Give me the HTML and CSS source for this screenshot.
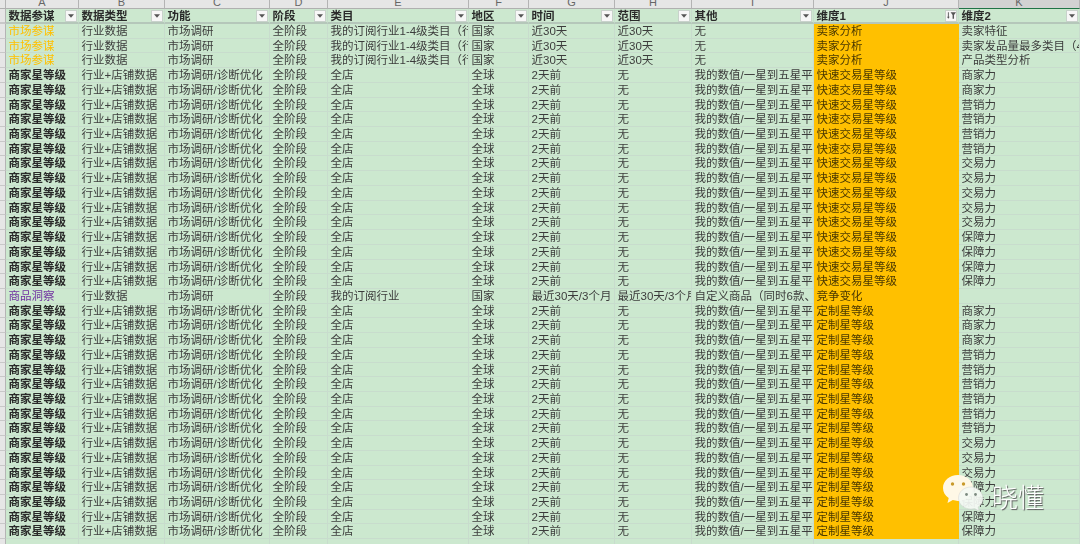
FILE: index.html
```html
<!DOCTYPE html>
<html lang="zh-CN">
<head>
<meta charset="utf-8">
<title>数据参谋</title>
<link rel="stylesheet" href="styles.css">
</head>
<body>
<div class="sheet">
<div class="row letters"><span></span><span>A</span><span>B</span><span>C</span><span>D</span><span>E</span><span>F</span><span>G</span><span>H</span><span>I</span><span>J</span><span class="sel">K</span></div>
<div class="row head"><span class="g"></span>
<span>数据参谋<i class="fb"><svg viewBox="0 0 7 4"><path d="M0 0h7L3.500 4z"/></svg></i></span>
<span>数据类型<i class="fb"><svg viewBox="0 0 7 4"><path d="M0 0h7L3.500 4z"/></svg></i></span>
<span>功能<i class="fb"><svg viewBox="0 0 7 4"><path d="M0 0h7L3.500 4z"/></svg></i></span>
<span>阶段<i class="fb"><svg viewBox="0 0 7 4"><path d="M0 0h7L3.500 4z"/></svg></i></span>
<span>类目<i class="fb"><svg viewBox="0 0 7 4"><path d="M0 0h7L3.500 4z"/></svg></i></span>
<span>地区<i class="fb"><svg viewBox="0 0 7 4"><path d="M0 0h7L3.500 4z"/></svg></i></span>
<span>时间<i class="fb"><svg viewBox="0 0 7 4"><path d="M0 0h7L3.500 4z"/></svg></i></span>
<span>范围<i class="fb"><svg viewBox="0 0 7 4"><path d="M0 0h7L3.500 4z"/></svg></i></span>
<span>其他<i class="fb"><svg viewBox="0 0 7 4"><path d="M0 0h7L3.500 4z"/></svg></i></span>
<span>维度1<i class="fb"><svg class="funnel" viewBox="0 0 10 7"><path d="M1 0h1v5h1L1.500 7 0 5h1zM4 0h6L7.800 3v4H6.200V3z"/></svg></i></span>
<span>维度2<i class="fb"><svg viewBox="0 0 7 4"><path d="M0 0h7L3.500 4z"/></svg></i></span></div>
<div class="row"><span class="g"></span><span class="yel">市场参谋</span><span>行业数据</span><span>市场调研</span><span>全阶段</span><span>我的订阅行业1-4级类目（行业）</span><span>国家</span><span>近30天</span><span>近30天</span><span>无</span><span class="o">卖家分析</span><span>卖家特征</span></div>
<div class="row"><span class="g"></span><span class="yel">市场参谋</span><span>行业数据</span><span>市场调研</span><span>全阶段</span><span>我的订阅行业1-4级类目（行业）</span><span>国家</span><span>近30天</span><span>近30天</span><span>无</span><span class="o">卖家分析</span><span>卖家发品量最多类目（4级类目）</span></div>
<div class="row"><span class="g"></span><span class="yel">市场参谋</span><span>行业数据</span><span>市场调研</span><span>全阶段</span><span>我的订阅行业1-4级类目（行业）</span><span>国家</span><span>近30天</span><span>近30天</span><span>无</span><span class="o">卖家分析</span><span>产品类型分析</span></div>
<div class="row"><span class="g"></span><span class="b">商家星等级</span><span>行业+店铺数据</span><span>市场调研/诊断优化</span><span>全阶段</span><span>全店</span><span>全球</span><span>2天前</span><span>无</span><span>我的数值/一星到五星平均值</span><span class="o">快速交易星等级</span><span>商家力</span></div>
<div class="row"><span class="g"></span><span class="b">商家星等级</span><span>行业+店铺数据</span><span>市场调研/诊断优化</span><span>全阶段</span><span>全店</span><span>全球</span><span>2天前</span><span>无</span><span>我的数值/一星到五星平均值</span><span class="o">快速交易星等级</span><span>商家力</span></div>
<div class="row"><span class="g"></span><span class="b">商家星等级</span><span>行业+店铺数据</span><span>市场调研/诊断优化</span><span>全阶段</span><span>全店</span><span>全球</span><span>2天前</span><span>无</span><span>我的数值/一星到五星平均值</span><span class="o">快速交易星等级</span><span>营销力</span></div>
<div class="row"><span class="g"></span><span class="b">商家星等级</span><span>行业+店铺数据</span><span>市场调研/诊断优化</span><span>全阶段</span><span>全店</span><span>全球</span><span>2天前</span><span>无</span><span>我的数值/一星到五星平均值</span><span class="o">快速交易星等级</span><span>营销力</span></div>
<div class="row"><span class="g"></span><span class="b">商家星等级</span><span>行业+店铺数据</span><span>市场调研/诊断优化</span><span>全阶段</span><span>全店</span><span>全球</span><span>2天前</span><span>无</span><span>我的数值/一星到五星平均值</span><span class="o">快速交易星等级</span><span>营销力</span></div>
<div class="row"><span class="g"></span><span class="b">商家星等级</span><span>行业+店铺数据</span><span>市场调研/诊断优化</span><span>全阶段</span><span>全店</span><span>全球</span><span>2天前</span><span>无</span><span>我的数值/一星到五星平均值</span><span class="o">快速交易星等级</span><span>营销力</span></div>
<div class="row"><span class="g"></span><span class="b">商家星等级</span><span>行业+店铺数据</span><span>市场调研/诊断优化</span><span>全阶段</span><span>全店</span><span>全球</span><span>2天前</span><span>无</span><span>我的数值/一星到五星平均值</span><span class="o">快速交易星等级</span><span>交易力</span></div>
<div class="row"><span class="g"></span><span class="b">商家星等级</span><span>行业+店铺数据</span><span>市场调研/诊断优化</span><span>全阶段</span><span>全店</span><span>全球</span><span>2天前</span><span>无</span><span>我的数值/一星到五星平均值</span><span class="o">快速交易星等级</span><span>交易力</span></div>
<div class="row"><span class="g"></span><span class="b">商家星等级</span><span>行业+店铺数据</span><span>市场调研/诊断优化</span><span>全阶段</span><span>全店</span><span>全球</span><span>2天前</span><span>无</span><span>我的数值/一星到五星平均值</span><span class="o">快速交易星等级</span><span>交易力</span></div>
<div class="row"><span class="g"></span><span class="b">商家星等级</span><span>行业+店铺数据</span><span>市场调研/诊断优化</span><span>全阶段</span><span>全店</span><span>全球</span><span>2天前</span><span>无</span><span>我的数值/一星到五星平均值</span><span class="o">快速交易星等级</span><span>交易力</span></div>
<div class="row"><span class="g"></span><span class="b">商家星等级</span><span>行业+店铺数据</span><span>市场调研/诊断优化</span><span>全阶段</span><span>全店</span><span>全球</span><span>2天前</span><span>无</span><span>我的数值/一星到五星平均值</span><span class="o">快速交易星等级</span><span>交易力</span></div>
<div class="row"><span class="g"></span><span class="b">商家星等级</span><span>行业+店铺数据</span><span>市场调研/诊断优化</span><span>全阶段</span><span>全店</span><span>全球</span><span>2天前</span><span>无</span><span>我的数值/一星到五星平均值</span><span class="o">快速交易星等级</span><span>保障力</span></div>
<div class="row"><span class="g"></span><span class="b">商家星等级</span><span>行业+店铺数据</span><span>市场调研/诊断优化</span><span>全阶段</span><span>全店</span><span>全球</span><span>2天前</span><span>无</span><span>我的数值/一星到五星平均值</span><span class="o">快速交易星等级</span><span>保障力</span></div>
<div class="row"><span class="g"></span><span class="b">商家星等级</span><span>行业+店铺数据</span><span>市场调研/诊断优化</span><span>全阶段</span><span>全店</span><span>全球</span><span>2天前</span><span>无</span><span>我的数值/一星到五星平均值</span><span class="o">快速交易星等级</span><span>保障力</span></div>
<div class="row"><span class="g"></span><span class="b">商家星等级</span><span>行业+店铺数据</span><span>市场调研/诊断优化</span><span>全阶段</span><span>全店</span><span>全球</span><span>2天前</span><span>无</span><span>我的数值/一星到五星平均值</span><span class="o">快速交易星等级</span><span>保障力</span></div>
<div class="row"><span class="g"></span><span class="pur">商品洞察</span><span>行业数据</span><span>市场调研</span><span>全阶段</span><span>我的订阅行业</span><span>国家</span><span>最近30天/3个月</span><span>最近30天/3个月</span><span>自定义商品（同时6款、竞品）</span><span class="o">竞争变化</span><span></span></div>
<div class="row"><span class="g"></span><span class="b">商家星等级</span><span>行业+店铺数据</span><span>市场调研/诊断优化</span><span>全阶段</span><span>全店</span><span>全球</span><span>2天前</span><span>无</span><span>我的数值/一星到五星平均值</span><span class="o">定制星等级</span><span>商家力</span></div>
<div class="row"><span class="g"></span><span class="b">商家星等级</span><span>行业+店铺数据</span><span>市场调研/诊断优化</span><span>全阶段</span><span>全店</span><span>全球</span><span>2天前</span><span>无</span><span>我的数值/一星到五星平均值</span><span class="o">定制星等级</span><span>商家力</span></div>
<div class="row"><span class="g"></span><span class="b">商家星等级</span><span>行业+店铺数据</span><span>市场调研/诊断优化</span><span>全阶段</span><span>全店</span><span>全球</span><span>2天前</span><span>无</span><span>我的数值/一星到五星平均值</span><span class="o">定制星等级</span><span>商家力</span></div>
<div class="row"><span class="g"></span><span class="b">商家星等级</span><span>行业+店铺数据</span><span>市场调研/诊断优化</span><span>全阶段</span><span>全店</span><span>全球</span><span>2天前</span><span>无</span><span>我的数值/一星到五星平均值</span><span class="o">定制星等级</span><span>营销力</span></div>
<div class="row"><span class="g"></span><span class="b">商家星等级</span><span>行业+店铺数据</span><span>市场调研/诊断优化</span><span>全阶段</span><span>全店</span><span>全球</span><span>2天前</span><span>无</span><span>我的数值/一星到五星平均值</span><span class="o">定制星等级</span><span>营销力</span></div>
<div class="row"><span class="g"></span><span class="b">商家星等级</span><span>行业+店铺数据</span><span>市场调研/诊断优化</span><span>全阶段</span><span>全店</span><span>全球</span><span>2天前</span><span>无</span><span>我的数值/一星到五星平均值</span><span class="o">定制星等级</span><span>营销力</span></div>
<div class="row"><span class="g"></span><span class="b">商家星等级</span><span>行业+店铺数据</span><span>市场调研/诊断优化</span><span>全阶段</span><span>全店</span><span>全球</span><span>2天前</span><span>无</span><span>我的数值/一星到五星平均值</span><span class="o">定制星等级</span><span>营销力</span></div>
<div class="row"><span class="g"></span><span class="b">商家星等级</span><span>行业+店铺数据</span><span>市场调研/诊断优化</span><span>全阶段</span><span>全店</span><span>全球</span><span>2天前</span><span>无</span><span>我的数值/一星到五星平均值</span><span class="o">定制星等级</span><span>营销力</span></div>
<div class="row"><span class="g"></span><span class="b">商家星等级</span><span>行业+店铺数据</span><span>市场调研/诊断优化</span><span>全阶段</span><span>全店</span><span>全球</span><span>2天前</span><span>无</span><span>我的数值/一星到五星平均值</span><span class="o">定制星等级</span><span>营销力</span></div>
<div class="row"><span class="g"></span><span class="b">商家星等级</span><span>行业+店铺数据</span><span>市场调研/诊断优化</span><span>全阶段</span><span>全店</span><span>全球</span><span>2天前</span><span>无</span><span>我的数值/一星到五星平均值</span><span class="o">定制星等级</span><span>交易力</span></div>
<div class="row"><span class="g"></span><span class="b">商家星等级</span><span>行业+店铺数据</span><span>市场调研/诊断优化</span><span>全阶段</span><span>全店</span><span>全球</span><span>2天前</span><span>无</span><span>我的数值/一星到五星平均值</span><span class="o">定制星等级</span><span>交易力</span></div>
<div class="row"><span class="g"></span><span class="b">商家星等级</span><span>行业+店铺数据</span><span>市场调研/诊断优化</span><span>全阶段</span><span>全店</span><span>全球</span><span>2天前</span><span>无</span><span>我的数值/一星到五星平均值</span><span class="o">定制星等级</span><span>交易力</span></div>
<div class="row"><span class="g"></span><span class="b">商家星等级</span><span>行业+店铺数据</span><span>市场调研/诊断优化</span><span>全阶段</span><span>全店</span><span>全球</span><span>2天前</span><span>无</span><span>我的数值/一星到五星平均值</span><span class="o">定制星等级</span><span>保障力</span></div>
<div class="row"><span class="g"></span><span class="b">商家星等级</span><span>行业+店铺数据</span><span>市场调研/诊断优化</span><span>全阶段</span><span>全店</span><span>全球</span><span>2天前</span><span>无</span><span>我的数值/一星到五星平均值</span><span class="o">定制星等级</span><span>保障力</span></div>
<div class="row"><span class="g"></span><span class="b">商家星等级</span><span>行业+店铺数据</span><span>市场调研/诊断优化</span><span>全阶段</span><span>全店</span><span>全球</span><span>2天前</span><span>无</span><span>我的数值/一星到五星平均值</span><span class="o">定制星等级</span><span>保障力</span></div>
<div class="row"><span class="g"></span><span class="b">商家星等级</span><span>行业+店铺数据</span><span>市场调研/诊断优化</span><span>全阶段</span><span>全店</span><span>全球</span><span>2天前</span><span>无</span><span>我的数值/一星到五星平均值</span><span class="o">定制星等级</span><span>保障力</span></div>
<div class="row"><span class="g"></span><span></span><span></span><span></span><span></span><span></span><span></span><span></span><span></span><span></span><span></span><span></span></div>
</div>
<div class="mark">
<svg class="mark-logo" viewBox="0 0 44 40" aria-hidden="true">
<path class="big" d="M16 1C7.500 1 1 6.800 1 14c0 4.200 2.200 7.700 5.700 10.100L5.500 29l5.300-2.900c1.700.5 3.400.8 5.200.8 8.500 0 15-5.800 15-13S24.500 1 16 1z"/>
<circle class="eye" cx="10.500" cy="10" r="1.700"/><circle class="eye" cx="21.500" cy="10" r="1.700"/>
<path class="small" d="M29 13c-7 0-12.500 4.800-12.500 11S22 35 29 35c1.300 0 2.600-.2 3.800-.5l4.200 2.500-1-3.900c3-2 5-4.900 5-8.100 0-6.200-5-12-12-12z"/>
<circle class="eye2" cx="24.500" cy="20.500" r="1.400"/><circle class="eye2" cx="33.500" cy="20.500" r="1.400"/>
</svg>
<span class="mark-text">晓懂</span>
</div>
</body>
</html>
```
FILE: styles.css
```css
html, body {
  margin: 0;
  padding: 0;
  width: 1080px;
  height: 544px;
  overflow: hidden;
  background: #cce8cf;
}
.sheet {
  width: 1080px;
  height: 544px;
  overflow: hidden;
  font-family: "Liberation Sans", "Noto Sans CJK SC", sans-serif;
  font-size: 11.5px;
  color: #3c3c3c;
  filter: blur(0.4px);
}
.row {
  display: grid;
  grid-template-columns: 6px 73px 86px 105px 58px 141px 60px 86px 77px 122px 145px 121px;
  height: 14.72px;
}
.row > span {
  display: block;
  min-width: 0;
  overflow: hidden;
  white-space: nowrap;
  line-height: 15.5px;
  padding-left: 2.500px;
  box-sizing: border-box;
  border-right: 1px solid #c8dccd;
  border-bottom: 1px solid #c8dccd;
}
.row > .g {
  background: #e6e6e6;
  padding: 0;
  border-right-color: #b4b4b4;
  border-bottom-color: #c8c8c8;
}
.row > .o {
  background: #ffc000;
  border-right-color: #ffc000;
  border-bottom-color: #ffc000;
  color: #4a3800;
}
.b { font-weight: 700; color: #2a2a2a; }
.yel { color: #ffc000; }
.pur { color: #7030a0; }

.letters { height: 9px; }
.letters > span {
  background: #e6e6e6;
  color: #666;
  text-align: center;
  font-size: 11px;
  line-height: 5px;
  padding: 0;
  border-right-color: #b4b4b4;
  border-bottom-color: #b0b0b0;
}
.letters > .sel {
  background: #d2d2d2;
  border-bottom: 1px solid #217346;
}

.head { height: 15px; }
.head > span {
  display: flex;
  align-items: center;
  justify-content: space-between;
  font-weight: 700;
  color: #2a2a2a;
  line-height: 14px;
  padding-right: 1px;
  border-bottom: 2px solid #b5c7ba;
}
.fb {
  display: flex;
  align-items: center;
  justify-content: center;
  flex: none;
  width: 12px;
  height: 12px;
  background: #f7f7f7;
  border: 1px solid #c8d2cb;
  box-sizing: border-box;
}
.fb svg { width: 6px; height: 4px; fill: #555; }
.fb .funnel { width: 9px; height: 7px; }

.mark {
  position: absolute;
  left: 942px;
  top: 474px;
  display: flex;
  align-items: center;
  gap: 6px;
}
.mark-logo { width: 44px; height: 40px; display: block; }
.big { fill: #fff8e6; }
.small { fill: #f4f8f4; fill-opacity: .92; stroke: #c9c9c9; stroke-width: .4; }
.eye { fill: #c99a2a; }
.eye2 { fill: #7c8a80; }
.mark-text {
  font-family: "Noto Sans CJK SC", sans-serif;
  font-weight: 300;
  font-size: 26px;
  line-height: 30px;
  color: #fff;
  text-shadow: 1px 1px 1px #555;
  margin-top: 3px;
}
```
